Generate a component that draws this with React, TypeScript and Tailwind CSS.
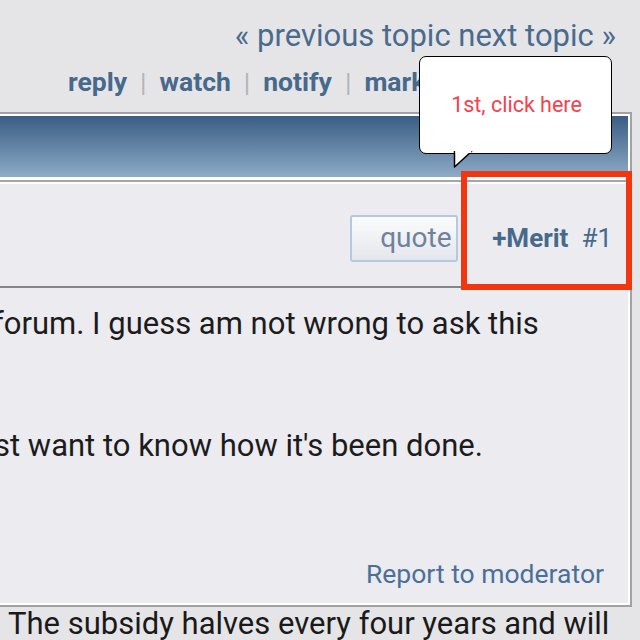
import React from 'react';

const Sep: React.FC = () => <span className="mx-[13px] font-normal text-[#b4b4b8]">|</span>;

// Speech bubble with a tail pointing down-left toward the Merit link
const Callout: React.FC = () => (
  <div className="absolute left-[419px] top-[56px] w-[193px] h-[98px]">
    <div className="w-full h-full rounded-[7px] border-[1.5px] border-black bg-white flex items-center justify-center">
      <span className="text-[21.5px] text-[#f2434f] pl-[2px]">1st, click here</span>
    </div>
    <svg className="absolute left-[34px] top-[95px]" width="22" height="18" viewBox="0 0 22 18">
      <path d="M1.5 0 L1.5 16 L19 0" fill="white" stroke="black" strokeWidth="1.5" strokeLinejoin="round" />
      <rect x="2.3" y="0" width="16" height="2" fill="white" />
    </svg>
  </div>
);

const App: React.FC = () => {
  return (
    <div
      className="relative w-[640px] h-[640px] overflow-hidden bg-[#e5e5e8]"
      style={{ fontFamily: 'Roboto, "Liberation Sans", sans-serif' }}
    >
      {/* Topic navigation */}
      <div className="pt-[16px] pr-[24px] text-right text-[31px] leading-[40px] text-[#4a6b8d] whitespace-nowrap">
        « previous topic next topic »
      </div>

      {/* Action links */}
      <div className="mt-[8px] pl-[68px] text-[26.5px] leading-[36px] font-bold text-[#47698b] whitespace-nowrap">
        reply<Sep />watch<Sep />notify<Sep />mark unread
      </div>

      {/* Post table */}
      <div className="mt-[12px] ml-[-10px] w-[642px] border-2 border-[#a2a2a6] bg-white p-[2px]">
        <div className="h-[61px] bg-gradient-to-b from-[#3a5e84] to-[#8eabc7]" />
        <div className="mt-[3px] border-t-2 border-[#a6a6aa] bg-[#ebebf0]">
          <div className="border-t-2 border-white h-[106px] border-b-2 border-b-[#858589] flex items-center justify-end pr-[16px] pt-[6px]">
            <button className="w-[108px] h-[47px] rounded-[3px] border-2 border-[#b6c8de] bg-gradient-to-b from-[#fbfbfc] to-[#e3e6ec] text-[28px] leading-[40px] text-[#6f829d] pl-[28px] text-left whitespace-nowrap overflow-hidden">
              quote
            </button>
            <span className="ml-[34px] text-[26px] font-bold text-[#47698b]">+Merit</span>
            <span className="ml-[13px] text-[26px] text-[#47698b]">#1</span>
          </div>

          <div className="text-[31px] text-[#1c1c1c] whitespace-nowrap">
            <div className="ml-[-1px] leading-[40px] mt-[16px]">forum. I guess am not wrong to ask this</div>
            <div className="ml-[0px] leading-[40px] mt-[82px]">st want to know how it's been done.</div>
          </div>

          <div className="mt-[90px] pb-[11px] pr-[24px] text-right text-[26.5px] leading-[36px] text-[#4b7098]">
            Report to moderator
          </div>
        </div>
      </div>

      <div className="pl-[8px] text-[31px] leading-[34px] text-[#1a1a1a] whitespace-nowrap">
        The subsidy halves every four years and will
      </div>

      {/* Annotation overlays */}
      <div className="absolute left-[461px] top-[171px] w-[171px] h-[119px] border-[6px] border-[#f2360f]" />
      <Callout />
    </div>
  );
};

export default App;
